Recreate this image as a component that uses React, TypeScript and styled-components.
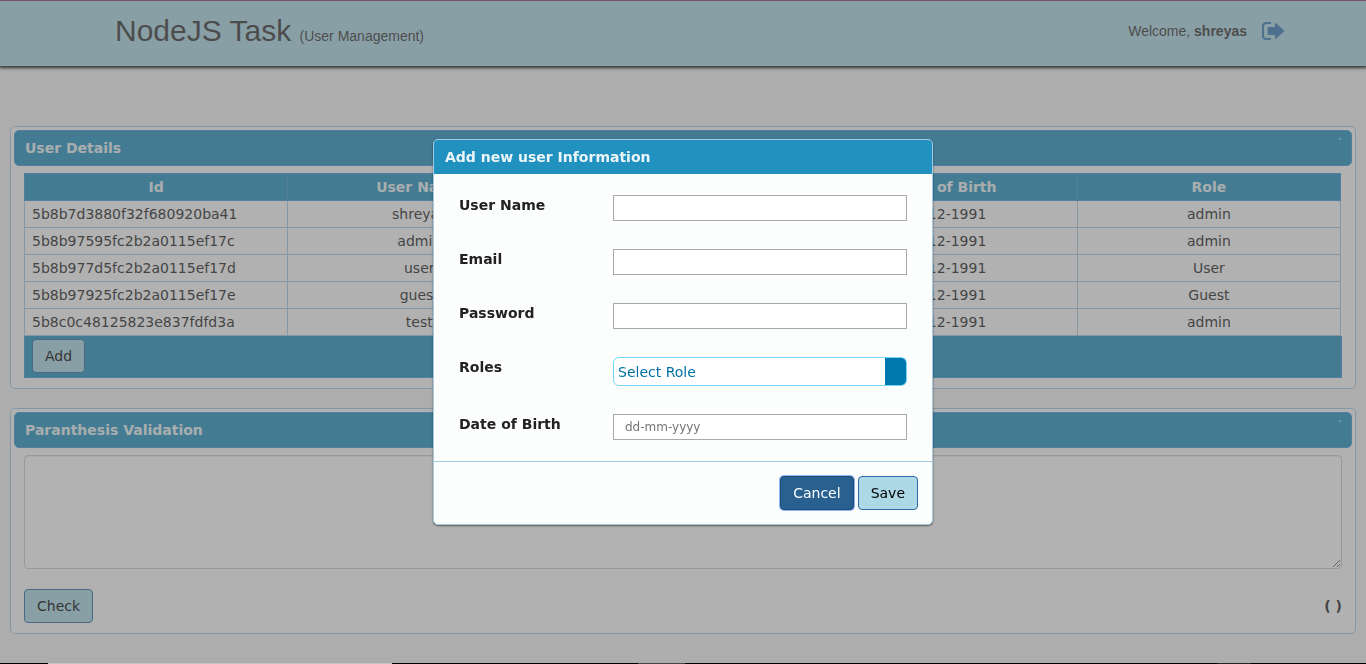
import React from "react";
import styled, { createGlobalStyle } from "styled-components";

const GlobalStyle = createGlobalStyle`
  *, *::before, *::after { box-sizing: border-box; }
  body {
    margin: 0;
    background: #f5f5f5;
    color: #222;
    font: 14px/20px Verdana, "DejaVu Sans", sans-serif;
  }
  button, input, select, textarea { font: inherit; margin: 0; }
`;

const TopBar = styled.header`
  display: flex;
  align-items: center;
  justify-content: space-between;
  height: 66px;
  padding: 0 81px 6px 115px;
  border-top: 1px solid #8a4068;
  background: #add8e6;
  box-shadow: 0 1px 3px 1px #000;
  color: #333;
  font-family: Arial, "Liberation Sans", sans-serif;
`;

const Brand = styled.h1`
  margin: 0;
  padding-top: 6px;
  font-size: 30px;
  line-height: 40px;
  font-weight: 400;
`;

const Tagline = styled.small`
  font-size: 14px;
`;

const Account = styled.div`
  display: flex;
  align-items: center;
  gap: 15px;
`;

const LogoutLink = styled.a`
  display: flex;
  color: #337ab7;
`;

const Content = styled.main`
  display: flex;
  flex-direction: column;
  gap: 19px;
  padding: 60px 10px 30px;
`;

const Panel = styled.section`
  padding: 3px;
  border: 1px solid #a6c9e2;
  border-radius: 5px;
  background: #fcfdfd;
`;

const PanelTitle = styled.h2`
  display: flex;
  justify-content: space-between;
  margin: 0;
  padding: 7px 10px;
  border: 1px solid #4297d7;
  border-radius: 5px;
  background: #2191c0;
  color: #eaf5f7;
  font-size: 14px;
  line-height: 20px;
  font-weight: 700;
`;

const TitleDot = styled.span`
  width: 2px;
  height: 2px;
  background: #79c9ec;
`;

const PanelBody = styled.div`
  padding: 7px 10px;
`;

const UserTable = styled.table`
  width: calc(100% - 1px);
  table-layout: fixed;
  border-collapse: collapse;
`;

const HeadCell = styled.th`
  height: 27px;
  padding: 0 8px;
  border: 1px solid #4297d7;
  background: #2191c0;
  color: #eaf5f7;
  font-weight: 700;
`;

const Cell = styled.td<{ $align?: "left" | "center" }>`
  height: 27px;
  padding: 0 7px;
  border: 1px solid #a6c9e2;
  text-align: ${(p) => p.$align ?? "center"};
`;

const TableFooter = styled.div`
  padding: 3px 7px 4px;
  border: 1px solid #4297d7;
  border-top: 0;
  background: #2191c0;
`;

const Button = styled.button<{ $primary?: boolean }>`
  height: 34px;
  padding: 0 12px;
  border: 1px solid ${(p) => (p.$primary ? "#204d74" : "#2e6da4")};
  border-radius: 4px;
  background: ${(p) => (p.$primary ? "#286090" : "#add8e6")};
  color: ${(p) => (p.$primary ? "#fff" : "#000")};
  box-shadow: ${(p) => (p.$primary ? "0 0 0 1px #8fb4f8" : "none")};
`;

const Expression = styled.textarea`
  display: block;
  width: 100%;
  height: 114px;
  padding: 6px 12px;
  border: 1px solid #ccc;
  border-radius: 4px;
  background: #fff;
  box-shadow: inset 0 1px 1px rgba(0, 0, 0, 0.08);
`;

const CheckRow = styled.div`
  display: flex;
  align-items: center;
  justify-content: space-between;
  padding-top: 20px;
`;

const Backdrop = styled.div`
  position: fixed;
  inset: 0;
  display: flex;
  align-items: center;
  justify-content: center;
  background: rgba(102, 102, 102, 0.5);
`;

const Dialog = styled.form`
  width: 500px;
  max-width: 100%;
  border: 1px solid #a6c9e2;
  border-radius: 5px;
  overflow: hidden;
  background: #fcfdfd;
  box-shadow: 0 1px 2px rgba(0, 0, 0, 0.5);
`;

const DialogTitle = styled.h2`
  margin: 0;
  padding: 7px 11px;
  background: #2191c0;
  color: #eaf5f7;
  font-size: 14px;
  line-height: 20px;
`;

const Fields = styled.div`
  display: flex;
  flex-direction: column;
  gap: 28px;
  padding: 21px 25px;
`;

const Field = styled.div`
  display: grid;
  grid-template-columns: 154px 1fr;
  align-items: start;
`;

const Label = styled.label`
  font-weight: 700;
`;

const TextInput = styled.input`
  width: 100%;
  height: 26px;
  padding: 0 11px;
  border: 1px solid #a9a9a9;
  background: #fff;
  font-size: 12px;
  &::placeholder { color: #757575; }
`;

const RoleSelect = styled.select`
  appearance: none;
  width: 100%;
  height: 29px;
  padding: 0 24px 0 4px;
  border: 1px solid #77d5f7;
  border-radius: 6px;
  background: linear-gradient(#0078ae, #0078ae) right / 21px 100% no-repeat #fff;
  color: #0070a3;
`;

const Actions = styled.div`
  display: flex;
  justify-content: flex-end;
  gap: 4px;
  padding: 14px;
  border-top: 1px solid #a6c9e2;
`;

const BottomStrip = styled.div`
  position: fixed;
  inset: auto 0 0;
  height: 1px;
  background: linear-gradient(
    90deg,
    #000 48px,
    #c4c4c4 48px 392px,
    #000 392px 638px,
    #444 638px 685px,
    #000 685px 1217px,
    #222 1217px 1251px,
    #000 1251px
  );
`;

const users = [
  { id: "5b8b7d3880f32f680920ba41", name: "shreyas", role: "admin" },
  { id: "5b8b97595fc2b2a0115ef17c", name: "admin", role: "admin" },
  { id: "5b8b977d5fc2b2a0115ef17d", name: "user", role: "User" },
  { id: "5b8b97925fc2b2a0115ef17e", name: "guest", role: "Guest" },
  { id: "5b8c0c48125823e837fdfd3a", name: "test", role: "admin" },
];

function LogoutIcon() {
  return (
    <svg width="23" height="18" viewBox="0 0 23 18" aria-hidden="true">
      <path d="M9 1H4.500Q1 1 1 4.500v9Q1 17 4.500 17H9" fill="none" stroke="currentColor" strokeWidth="2" />
      <path
        d="M6.500 5H13V1.600Q13 .4 14 1.200L22 8.500Q22.500 9 22 9.500L14 16.800Q13 17.600 13 16.400V13H6.500Q5.700 13 5.700 12.200V5.800Q5.700 5 6.500 5z"
        fill="currentColor"
      />
    </svg>
  );
}

export default function App() {
  return (
    <>
      <GlobalStyle />
      <TopBar>
        <Brand>
          NodeJS Task <Tagline>(User Management)</Tagline>
        </Brand>
        <Account>
          <span>
            Welcome, <b>shreyas</b>
          </span>
          <LogoutLink href="#logout" aria-label="Log out">
            <LogoutIcon />
          </LogoutLink>
        </Account>
      </TopBar>

      <Content>
        <Panel>
          <PanelTitle>
            User Details
            <TitleDot />
          </PanelTitle>
          <PanelBody>
            <UserTable>
              <thead>
                <tr>
                  <HeadCell>Id</HeadCell>
                  <HeadCell>User Name</HeadCell>
                  <HeadCell>Email</HeadCell>
                  <HeadCell>Date of Birth</HeadCell>
                  <HeadCell>Role</HeadCell>
                </tr>
              </thead>
              <tbody>
                {users.map((user) => (
                  <tr key={user.id}>
                    <Cell $align="left">{user.id}</Cell>
                    <Cell>{user.name}</Cell>
                    <Cell />
                    <Cell>12-12-1991</Cell>
                    <Cell>{user.role}</Cell>
                  </tr>
                ))}
              </tbody>
            </UserTable>
            <TableFooter>
              <Button type="button">Add</Button>
            </TableFooter>
          </PanelBody>
        </Panel>

        <Panel>
          <PanelTitle>
            Paranthesis Validation
            <TitleDot />
          </PanelTitle>
          <PanelBody>
            <Expression aria-label="Expression" />
            <CheckRow>
              <Button type="button">Check</Button>
              <b>( )</b>
            </CheckRow>
          </PanelBody>
        </Panel>
      </Content>

      <Backdrop>
        <Dialog role="dialog" aria-modal="true" aria-labelledby="dialog-title">
          <DialogTitle id="dialog-title">Add new user Information</DialogTitle>
          <Fields>
            <Field>
              <Label htmlFor="username">User Name</Label>
              <TextInput id="username" type="text" />
            </Field>
            <Field>
              <Label htmlFor="email">Email</Label>
              <TextInput id="email" type="email" />
            </Field>
            <Field>
              <Label htmlFor="password">Password</Label>
              <TextInput id="password" type="password" />
            </Field>
            <Field>
              <Label htmlFor="role">Roles</Label>
              <RoleSelect id="role" defaultValue="">
                <option value="">Select Role</option>
                <option value="admin">admin</option>
                <option value="user">User</option>
                <option value="guest">Guest</option>
              </RoleSelect>
            </Field>
            <Field>
              <Label htmlFor="dob">Date of Birth</Label>
              <TextInput id="dob" type="text" placeholder="dd-mm-yyyy" />
            </Field>
          </Fields>
          <Actions>
            <Button type="button" $primary>
              Cancel
            </Button>
            <Button type="submit">Save</Button>
          </Actions>
        </Dialog>
      </Backdrop>
      <BottomStrip />
    </>
  );
}
